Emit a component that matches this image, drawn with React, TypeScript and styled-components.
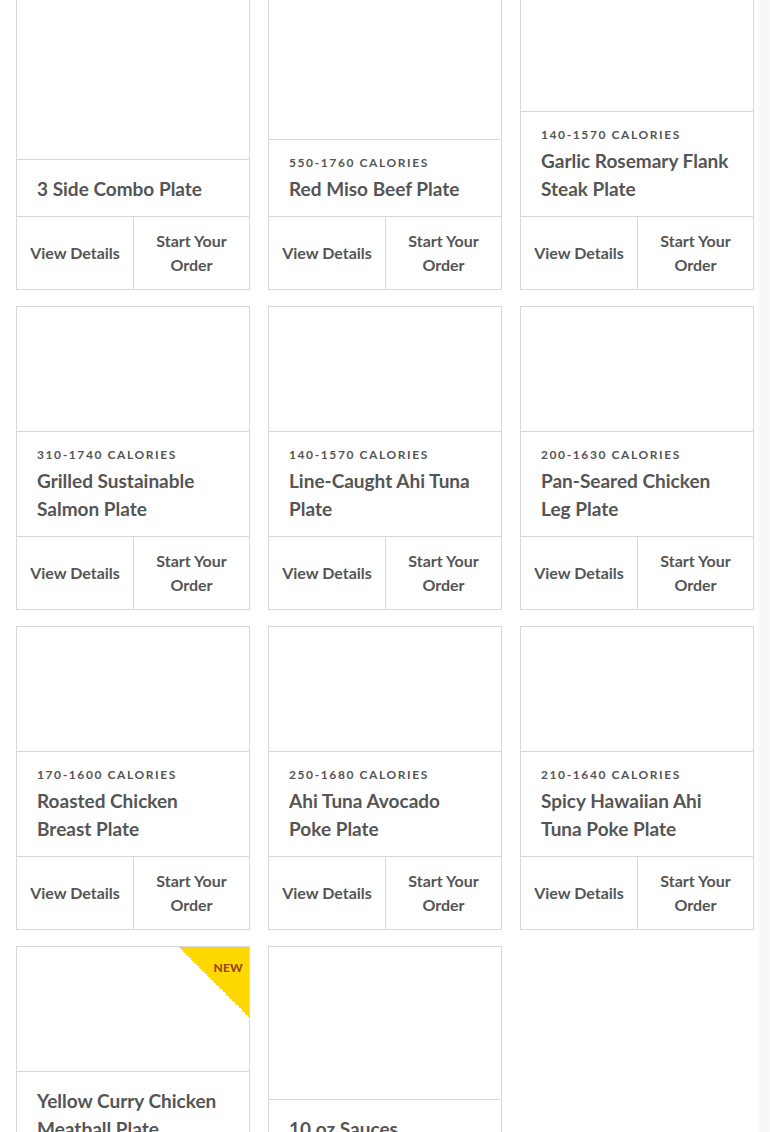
import React from "react";
import styled, { createGlobalStyle } from "styled-components";

const GlobalStyle = createGlobalStyle`
  html, body {
    margin: 0;
    padding: 0;
    background: linear-gradient(90deg, #ffffff 0, #ffffff 757px, #f7f7f7 761px, #f9f9f9 770px);
    font-family: Lato, "Open Sans", sans-serif;
    color: #545454;
    overflow: hidden;
  }
  * { box-sizing: border-box; }
`;

const Page = styled.div`
  padding: 0 16px;
  height: 1132px;
  overflow: hidden;
`;

const Grid = styled.div`
  margin-top: -14px;
  display: grid;
  grid-template-columns: repeat(3, 234px);
  column-gap: 18px;
  row-gap: 16px;
  align-items: stretch;
`;

const Card = styled.article`
  position: relative;
  display: flex;
  flex-direction: column;
  background: #fff;
  border: 1px solid #d8d8d8;
`;

const ImageArea = styled.div`
  flex: 1 1 auto;
  min-height: 124px;
  background: #fff;
`;

const Info = styled.div`
  border-top: 1px solid #d8d8d8;
  padding: 13px 20px 13px 20px;
`;

const Calories = styled.div`
  font-size: 12px;
  line-height: 20px;
  font-weight: 700;
  letter-spacing: 1.6px;
  text-transform: uppercase;
  color: #555;
`;

const Title = styled.h3`
  margin: 2px 0 0 0;
  font-size: 19px;
  line-height: 28px;
  font-weight: 700;
  color: #555;
`;

const TitleLine = styled.span`
  display: block;
  white-space: nowrap;
`;

const Actions = styled.div`
  border-top: 1px solid #d8d8d8;
  height: 73px;
  display: grid;
  grid-template-columns: 1fr 1fr;
`;

const ActionCell = styled.a<{ $divider?: boolean }>`
  display: flex;
  align-items: center;
  justify-content: center;
  text-align: center;
  padding: 0 4px;
  font-size: 16px;
  line-height: 24px;
  font-weight: 700;
  color: #555;
  text-decoration: none;
  border-left: ${(p) => (p.$divider ? "1px solid #d8d8d8" : "none")};
`;

const OrderText = styled.span`
  display: block;
  max-width: 90px;
`;

const Badge = styled.div`
  position: absolute;
  top: 0;
  right: 0;
  width: 70px;
  height: 70px;
  background: linear-gradient(225deg, #ffd800 0, #ffd800 50%, transparent 50%);
`;

const BadgeText = styled.span`
  position: absolute;
  top: 13px;
  right: 6px;
  font-size: 12px;
  font-weight: 900;
  letter-spacing: 0.2px;
  color: #a0461a;
`;

type Item = { lines: string[]; calories?: string; isNew?: boolean };

const items: Item[] = [
  { lines: ["3 Side Combo Plate"] },
  { lines: ["Red Miso Beef Plate"], calories: "550-1760 Calories" },
  { lines: ["Garlic Rosemary Flank", "Steak Plate"], calories: "140-1570 Calories" },
  { lines: ["Grilled Sustainable", "Salmon Plate"], calories: "310-1740 Calories" },
  { lines: ["Line-Caught Ahi Tuna", "Plate"], calories: "140-1570 Calories" },
  { lines: ["Pan-Seared Chicken", "Leg Plate"], calories: "200-1630 Calories" },
  { lines: ["Roasted Chicken", "Breast Plate"], calories: "170-1600 Calories" },
  { lines: ["Ahi Tuna Avocado", "Poke Plate"], calories: "250-1680 Calories" },
  { lines: ["Spicy Hawaiian Ahi", "Tuna Poke Plate"], calories: "210-1640 Calories" },
  { lines: ["Yellow Curry Chicken", "Meatball Plate"], isNew: true },
  { lines: ["10 oz Sauces"] },
];

const MenuCard: React.FC<{ item: Item }> = ({ item }) => (
  <Card>
    <ImageArea />
    {item.isNew && (
      <Badge>
        <BadgeText>NEW</BadgeText>
      </Badge>
    )}
    <Info>
      {item.calories && <Calories>{item.calories}</Calories>}
      <Title>
        {item.lines.map((l) => (
          <TitleLine key={l}>{l}</TitleLine>
        ))}
      </Title>
    </Info>
    <Actions>
      <ActionCell href="#">View Details</ActionCell>
      <ActionCell href="#" $divider>
        <OrderText>Start Your Order</OrderText>
      </ActionCell>
    </Actions>
  </Card>
);

export default function App() {
  return (
    <>
      <GlobalStyle />
      <Page>
        <Grid>
          {items.map((it) => (
            <MenuCard key={it.lines.join(" ")} item={it} />
          ))}
        </Grid>
      </Page>
    </>
  );
}
